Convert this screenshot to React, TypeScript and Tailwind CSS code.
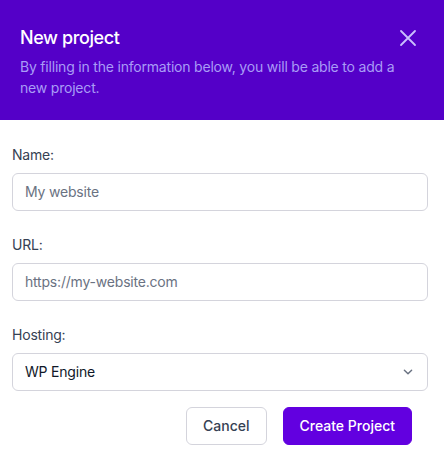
import { useState } from "react";

export default function App() {
  const [hosting, setHosting] = useState("WP Engine");

  const label = "block text-sm leading-5 tracking-[-0.2px] text-gray-700";
  const field =
    "w-full rounded-md border border-[#d4d4dc] bg-white px-3 py-2 text-sm leading-5 tracking-[-0.2px] text-gray-900 placeholder:text-gray-500";

  return (
    <div className="w-[444px] bg-white font-['Inter',sans-serif]">
      <div className="flex items-start justify-between bg-[#5400c8] px-5 pt-6 pb-[22px]">
        <div className="min-w-0 flex-1">
          <h2 className="text-lg font-medium leading-7 tracking-[-0.4px] text-white">New project</h2>
          <p className="mt-1 whitespace-nowrap text-sm leading-[21px] tracking-[-0.2px] text-[#a99cf6]">
            By filling in the information below, you will be able to add a
            <br />
            new project.
          </p>
        </div>
        <button className="mt-[2px] mr-1 shrink-0 text-[#c9bffd]" aria-label="Close">
          <svg width="24" height="24" viewBox="0 0 24 24" fill="none" stroke="currentColor" strokeWidth="1.8" strokeLinecap="round">
            <path d="M5 5l14 14M19 5L5 19" />
          </svg>
        </button>
      </div>

      <form className="pt-[25px] pr-4 pb-5 pl-3">
        <label className={`mb-2 ${label}`}>Name:</label>
        <input placeholder="My website" className={field} />

        <label className={`mt-6 mb-2 ${label}`}>URL:</label>
        <input placeholder="https://my-website.com" className={field} />

        <label className={`mt-6 mb-2 ${label}`}>Hosting:</label>
        <div className="relative">
          <select
            value={hosting}
            onChange={(e) => setHosting(e.target.value)}
            className={`appearance-none ${field}`}
          >
            <option>WP Engine</option>
            <option>Kinsta</option>
            <option>SiteGround</option>
          </select>
          <svg
            className="pointer-events-none absolute right-[11px] top-1/2 -translate-y-1/2 text-gray-500"
            width="18"
            height="18"
            viewBox="0 0 20 20"
            fill="none"
            stroke="currentColor"
            strokeWidth="1.6"
            strokeLinecap="round"
            strokeLinejoin="round"
          >
            <path d="M6 8l4 4 4-4" />
          </svg>
        </div>

        <div className="mt-4 flex justify-end gap-4 pr-4">
          <button
            type="button"
            className="rounded-md border border-[#d4d4dc] bg-white px-4 py-2 text-sm font-medium leading-5 text-gray-700"
          >
            Cancel
          </button>
          <button
            type="submit"
            className="rounded-md border border-[#6200e0] bg-[#6200e0] px-4 py-2 text-sm font-medium leading-5 text-white"
          >
            Create Project
          </button>
        </div>
      </form>
    </div>
  );
}
